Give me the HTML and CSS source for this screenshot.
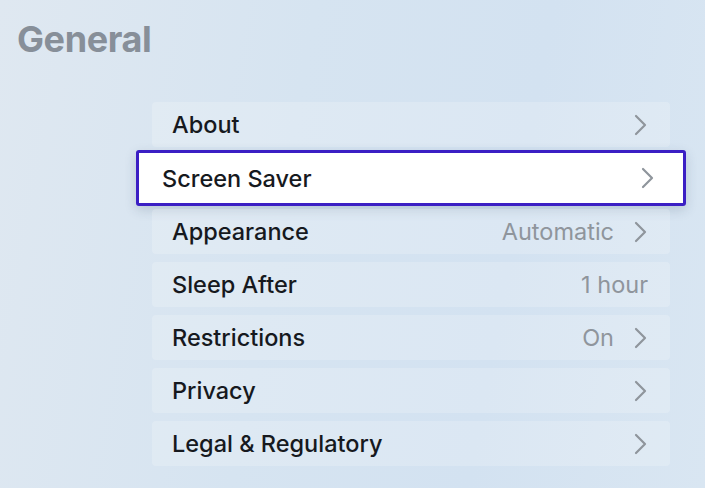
FILE: index.html
```html
<!DOCTYPE html>
<html lang="en">
<head>
    <meta charset="UTF-8">
    <meta name="viewport" content="width=device-width, initial-scale=1.0">
    <title>General</title>
    <link rel="stylesheet" href="styles.css">
</head>
<body>
    <div class="screen">
        <h1 class="title">General</h1>

        <!-- Settings list -->
        <div class="list">
            <div class="row">
                <span class="label">About</span>
                <span class="chev"><svg width="14" height="22" viewBox="0 0 14 22"><path d="M2 2l9 9-9 9" fill="none" stroke="currentColor" stroke-width="2.2" stroke-linecap="round" stroke-linejoin="round"/></svg></span>
            </div>
            <div class="row focused">
                <span class="label">Screen Saver</span>
                <span class="chev"><svg width="14" height="22" viewBox="0 0 14 22"><path d="M2 2l9 9-9 9" fill="none" stroke="currentColor" stroke-width="2.2" stroke-linecap="round" stroke-linejoin="round"/></svg></span>
            </div>
            <div class="row">
                <span class="label">Appearance</span>
                <span class="value">Automatic</span>
                <span class="chev"><svg width="14" height="22" viewBox="0 0 14 22"><path d="M2 2l9 9-9 9" fill="none" stroke="currentColor" stroke-width="2.2" stroke-linecap="round" stroke-linejoin="round"/></svg></span>
            </div>
            <div class="row">
                <span class="label">Sleep After</span>
                <span class="value no-chev">1 hour</span>
            </div>
            <div class="row">
                <span class="label">Restrictions</span>
                <span class="value">On</span>
                <span class="chev"><svg width="14" height="22" viewBox="0 0 14 22"><path d="M2 2l9 9-9 9" fill="none" stroke="currentColor" stroke-width="2.2" stroke-linecap="round" stroke-linejoin="round"/></svg></span>
            </div>
            <div class="row">
                <span class="label">Privacy</span>
                <span class="chev"><svg width="14" height="22" viewBox="0 0 14 22"><path d="M2 2l9 9-9 9" fill="none" stroke="currentColor" stroke-width="2.2" stroke-linecap="round" stroke-linejoin="round"/></svg></span>
            </div>
            <div class="row">
                <span class="label">Legal &amp; Regulatory</span>
                <span class="chev"><svg width="14" height="22" viewBox="0 0 14 22"><path d="M2 2l9 9-9 9" fill="none" stroke="currentColor" stroke-width="2.2" stroke-linecap="round" stroke-linejoin="round"/></svg></span>
            </div>
        </div>
    </div>
</body>
</html>
```

FILE: styles.css
```css
body {
    margin: 0;
    font-family: Inter, "Liberation Sans", sans-serif;
    color: #16191e;
}
.screen {
    width: 705px;
    height: 488px;
    overflow: hidden;
    background: linear-gradient(100deg, #dfe8f1 0%, #d6e4f1 40%, #d3e2f1 70%, #d9e6f2 100%);
    padding: 19px 0 0 17px;
    box-sizing: border-box;
}
.title {
    margin: 0;
    font-size: 36px;
    font-weight: 700;
    color: #878f99;
    letter-spacing: -0.4px;
    line-height: 40px;
}
.list {
    margin: 43px 0 0 135px;
    width: 518px;
    display: flex;
    flex-direction: column;
    gap: 8px;
}
.row {
    height: 45px;
    display: flex;
    align-items: center;
    padding: 0 22px 0 20px;
    background: rgba(255, 255, 255, 0.2);
    border-radius: 4px;
    font-size: 23.5px;
    font-weight: 500;
}
.label {
    flex: 1;
}
.value {
    color: #8f959c;
    font-weight: 400;
    margin-right: 20px;
}
.value.no-chev {
    margin-right: 0;
}
.chev {
    display: flex;
    color: #8f959c;
}
.focused {
    height: 50px;
    margin: -5px -16px;
    padding: 0 28px 0 23px;
    background: #ffffff;
    border: 3px solid #3b1fc4;
    border-radius: 3px;
    box-shadow: 0 4px 12px rgba(40, 60, 90, 0.18);
}
```
